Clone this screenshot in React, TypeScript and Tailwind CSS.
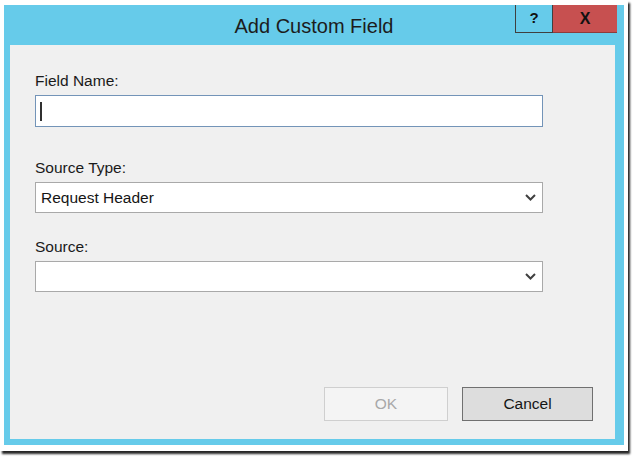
import React from 'react'

const font = { fontFamily: '"Liberation Sans", Arial, sans-serif' }

function Chevron() {
  return (
    <svg width="11" height="7" viewBox="0 0 11 7" className="shrink-0">
      <polyline
        points="1,1 5.5,5.5 10,1"
        fill="none"
        stroke="#404040"
        strokeWidth="2"
      />
    </svg>
  )
}

function Label({ children }: { children: React.ReactNode }) {
  return (
    <div className="mb-[5px] h-[18px] text-[15.5px] leading-[18px] text-[#1a1a1a]">
      {children}
    </div>
  )
}

function Select({ value }: { value?: string }) {
  return (
    <div className="flex h-[31px] w-[508px] items-center border border-[#a9a9a9] bg-white pl-[5px] pr-[6px]">
      <span className="flex-1 text-[15.5px] leading-[18px] text-[#151515]">
        {value}
      </span>
      <Chevron />
    </div>
  )
}

export default function App() {
  return (
    <div className="h-[457px] w-[633px] bg-white" style={font}>
      {/* white frame with drop shadow */}
      <div className="h-[451px] w-[628px] bg-white pl-[4px] pr-[4px] pt-[5px] shadow-[2px_3px_2px_rgba(0,0,0,0.85)]">
        {/* window */}
        <div className="flex h-[440px] w-[620px] flex-col bg-[#66cbea]">
          {/* title bar */}
          <div className="grid h-[40px] shrink-0 grid-cols-[1fr_auto_1fr]">
            <div />
            <div className="pt-[2px] text-[20px] leading-[38px] text-[#1c1c1c]">
              Add Custom Field
            </div>
            <div className="flex items-start justify-end pr-[7px]">
              <div className="flex h-[28px] w-[38px] items-center justify-center border-x border-b border-[#3f3f3f] text-[15px] font-bold text-[#111]">
                ?
              </div>
              <div className="flex h-[28px] w-[64px] items-center justify-center border-b border-[#8e3b3b] bg-[#c75050] text-[16px] font-bold text-[#111]">
                X
              </div>
            </div>
          </div>

          {/* content */}
          <div className="ml-[6px] mr-[9px] flex flex-1 flex-col bg-[#f0f0f0] pb-[18px] pl-[25px] pr-[22px] pt-[27px]">
            <Label>Field Name:</Label>
            <div className="flex h-[32px] w-[508px] items-center border border-[#7394b8] bg-white pl-[4px]">
              <span className="h-[19px] w-[2px] bg-[#303030]" />
            </div>

            <div className="mt-[32px]">
              <Label>Source Type:</Label>
              <Select value="Request Header" />
            </div>

            <div className="mt-[25px]">
              <Label>Source:</Label>
              <Select />
            </div>

            <div className="flex-1" />

            <div className="flex justify-end gap-[14px]">
              <div className="flex h-[34px] w-[124px] items-center justify-center border border-[#cfcfcf] bg-[#f4f4f4] text-[15.5px] text-[#a8a8a8]">
                OK
              </div>
              <div className="flex h-[34px] w-[131px] items-center justify-center border border-[#707070] bg-[#dddddd] text-[15.5px] text-[#151515]">
                Cancel
              </div>
            </div>
          </div>
          <div className="h-[6px] shrink-0" />
        </div>
      </div>
    </div>
  )
}
